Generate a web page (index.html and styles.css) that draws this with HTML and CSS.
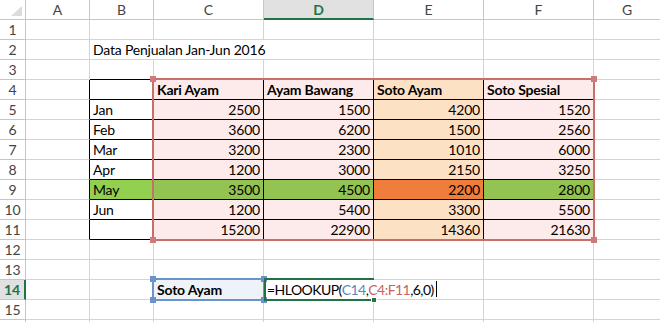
FILE: index.html
```html
<!DOCTYPE html>
<html>
<head>
<meta charset="utf-8">
<link rel="stylesheet" href="styles.css">
</head>
<body>
<div class="wrap">
  <div class="sheet">
    <div class="c corner"><svg class="tri" width="11" height="10" viewBox="0 0 11 10"><polygon points="11,0 11,10 0,10" fill="#dcdcdc"/></svg></div>
    <div class="c hd">A</div><div class="c hd">B</div><div class="c hd">C</div><div class="c hd sel">D</div><div class="c hd">E</div><div class="c hd">F</div><div class="c hd">G</div>

    <div class="c rh">1</div><div class="c"></div><div class="c"></div><div class="c"></div><div class="c"></div><div class="c"></div><div class="c"></div><div class="c"></div>

    <div class="c rh">2</div><div class="c"></div><div class="c s3">Data Penjualan Jan-Jun 2016</div><div class="c"></div><div class="c"></div><div class="c"></div>

    <div class="c rh">3</div><div class="c"></div><div class="c tb"></div><div class="c tb"></div><div class="c tb"></div><div class="c tb"></div><div class="c tb"></div><div class="c"></div>

    <div class="c rh">4</div><div class="c tl"></div><div class="c t"></div><div class="c t pk b">Kari Ayam</div><div class="c t pk b">Ayam Bawang</div><div class="c t or b">Soto Ayam</div><div class="c t pk b">Soto Spesial</div><div class="c"></div>

    <div class="c rh">5</div><div class="c tl"></div><div class="c t">Jan</div><div class="c t pk n">2500</div><div class="c t pk n">1500</div><div class="c t or n">4200</div><div class="c t pk n">1520</div><div class="c"></div>

    <div class="c rh">6</div><div class="c tl"></div><div class="c t">Feb</div><div class="c t pk n">3600</div><div class="c t pk n">6200</div><div class="c t or n">1500</div><div class="c t pk n">2560</div><div class="c"></div>

    <div class="c rh">7</div><div class="c tl"></div><div class="c t">Mar</div><div class="c t pk n">3200</div><div class="c t pk n">2300</div><div class="c t or n">1010</div><div class="c t pk n">6000</div><div class="c"></div>

    <div class="c rh">8</div><div class="c tl"></div><div class="c t">Apr</div><div class="c t pk n">1200</div><div class="c t pk n">3000</div><div class="c t or n">2150</div><div class="c t pk n">3250</div><div class="c"></div>

    <div class="c rh">9</div><div class="c tl"></div><div class="c t gr">May</div><div class="c t gr2 n">3500</div><div class="c t gr2 n">4500</div><div class="c t og n">2200</div><div class="c t gr2 n">2800</div><div class="c"></div>

    <div class="c rh">10</div><div class="c tl"></div><div class="c t">Jun</div><div class="c t pk n">1200</div><div class="c t pk n">5400</div><div class="c t or n">3300</div><div class="c t pk n">5500</div><div class="c"></div>

    <div class="c rh">11</div><div class="c tl"></div><div class="c t"></div><div class="c t pk n">15200</div><div class="c t pk n">22900</div><div class="c t or n">14360</div><div class="c t pk n">21630</div><div class="c"></div>

    <div class="c rh">12</div><div class="c"></div><div class="c"></div><div class="c"></div><div class="c"></div><div class="c"></div><div class="c"></div><div class="c"></div>

    <div class="c rh">13</div><div class="c"></div><div class="c"></div><div class="c"></div><div class="c"></div><div class="c"></div><div class="c"></div><div class="c"></div>

    <div class="c rh rsel">14</div><div class="c"></div><div class="c"></div><div class="c lb b">Soto Ayam</div><div class="c s2 fx">=HLOOKUP(<span class="rb">C14</span>,<span class="rr">C4:F11</span>,6,0)<span class="caret"></span></div><div class="c"></div><div class="c"></div>

    <div class="c rh">15</div><div class="c"></div><div class="c"></div><div class="c"></div><div class="c"></div><div class="c"></div><div class="c"></div><div class="c"></div>

    <div class="c rh"></div><div class="c"></div><div class="c"></div><div class="c"></div><div class="c"></div><div class="c"></div><div class="c"></div><div class="c"></div>
  </div>

  <div class="ref red">
    <span class="h tlh"></span><span class="h trh"></span><span class="h blh"></span><span class="h brh"></span>
  </div>
  <div class="ref blue">
    <span class="h tlh"></span><span class="h trh"></span><span class="h blh"></span><span class="h brh"></span>
  </div>
  <div class="active"><span class="fill"></span></div>
</div>
</body>
</html>
```

FILE: styles.css
```css
html, body {
  margin: 0;
  padding: 0;
  background: #fff;
  overflow: hidden;
}

.wrap {
  position: relative;
  width: 660px;
  height: 322px;
  overflow: hidden;
  font-family: "Lato", "Open Sans", sans-serif;
  font-size: 14px;
  letter-spacing: -0.2px;
  color: #000;
}

.sheet {
  display: grid;
  grid-template-columns: 26px 64px 64px 110px 110px 110px 110px 67px;
  grid-auto-rows: 20px;
}

.c {
  box-sizing: border-box;
  border-right: 1px solid #d4d4d4;
  border-bottom: 1px solid #d4d4d4;
  display: flex;
  align-items: flex-end;
  padding: 0 3px 1px 3px;
  white-space: nowrap;
  line-height: 17px;
}

.corner {
  border-right-color: #c6c6c6;
  border-bottom-color: #c6c6c6;
  position: relative;
}
.tri {
  position: absolute;
  right: 3px;
  bottom: 3px;
}

.hd {
  justify-content: center;
  color: #444;
  border-right-color: #c6c6c6;
  border-bottom-color: #c6c6c6;
  font-size: 14px;
  letter-spacing: 0;
}
.hd.sel {
  background: #e1e1e1;
  color: #217346;
  font-weight: bold;
  border-bottom: 2px solid #217346;
  padding-bottom: 0;
}

.rh {
  justify-content: center;
  color: #444;
  border-right-color: #c6c6c6;
  border-bottom-color: #c6c6c6;
  padding: 0 0 1px 0;
  letter-spacing: 0;
}
.rh.rsel {
  background: #e1e1e1;
  color: #217346;
  font-weight: bold;
  border-right: 2px solid #217346;
}

.s3 { grid-column: span 3; }
.s2 { grid-column: span 2; }

.t {
  border-right-color: #000;
  border-bottom-color: #000;
}
.tb { border-bottom-color: #000; }
.tl { border-right-color: #000; }

.n { justify-content: flex-end; }
.b { font-weight: bold; }

.pk { background: #fdeaea; }
.or { background: #fde1c5; }
.gr { background: #92d050; }
.gr2 { background: #93c452; }
.og { background: #ef7d3b; }

.lb { background: #eef3fa; }

.fx { padding-left: 3px; letter-spacing: -0.55px; }
.rb { color: #5b87bd; }
.rr { color: #c8625e; }
.caret {
  display: inline-block;
  width: 1px;
  height: 16px;
  background: #000;
  margin-left: 2px;
  margin-bottom: 1px;
}

.ref {
  position: absolute;
  box-sizing: border-box;
  border: 2px solid;
}
.ref.red {
  left: 152px;
  top: 78px;
  width: 443px;
  height: 163px;
  border-color: #c6706c;
}
.ref.blue {
  left: 152px;
  top: 278px;
  width: 113px;
  height: 23px;
  border-color: #6b93c9;
}
.h {
  position: absolute;
  width: 6px;
  height: 6px;
}
.red .h { background: #cd7b78; }
.blue .h { background: #6b93c9; }
.tlh { left: -4px; top: -4px; }
.trh { right: -4px; top: -4px; }
.blh { left: -4px; bottom: -4px; }
.brh { right: -4px; bottom: -4px; }

.active {
  position: absolute;
  box-sizing: border-box;
  left: 264px;
  top: 278px;
  width: 110px;
  height: 23px;
  border-top: 2px solid #217346;
  border-left: 2px solid #217346;
  border-bottom: 2px solid #217346;
}
.fill {
  position: absolute;
  right: -3px;
  bottom: -4px;
  width: 6px;
  height: 6px;
  background: #217346;
  border: 1px solid #fff;
  box-sizing: border-box;
}
```
